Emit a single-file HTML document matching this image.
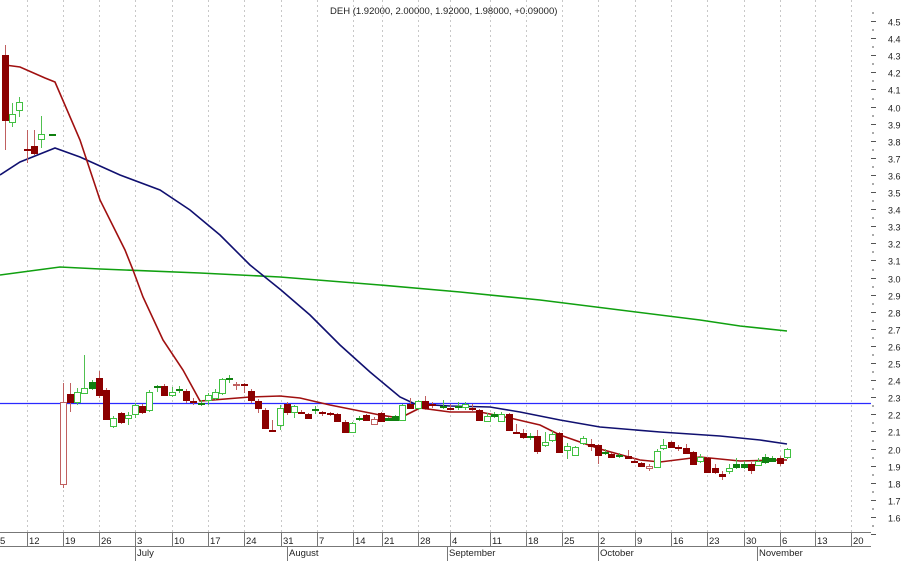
<!DOCTYPE html>
<html><head><meta charset="utf-8"><style>
html,body{margin:0;padding:0;background:#fff;width:903px;height:561px;overflow:hidden}
svg{display:block}
text{font-family:"Liberation Sans",sans-serif;font-size:10px;fill:#222}
</style></head><body>
<svg id="s" width="903" height="561" xmlns="http://www.w3.org/2000/svg">
<g id="grid" stroke="#c8c8c8" stroke-dasharray="2,3" stroke-width="1"></g>
<text x="330" y="14" style="font-size:9.5px">DEH (1.92000, 2.00000, 1.92000, 1.98000, +0.09000)</text>
<line x1="0" y1="403.5" x2="871" y2="403.5" stroke="#2a2aff" stroke-width="1.3"/>
<polyline fill="none" stroke="#10a010" stroke-width="1.6" points="0,275 30,271 60,267 100,269 200,273 280,277 380,285 460,292 540,300 620,310 700,320 740,326 787,331"/>
<polyline fill="none" stroke="#101070" stroke-width="1.6" points="0,175 20,162 55,148 80,157 120,175 160,190 190,210 220,235 250,265 281,290 310,315 340,345 370,372 400,397 415,404 450,406 490,407 520,412 560,420 600,427 660,432 720,436 760,440 787,444"/>
<polyline fill="none" stroke="#a01010" stroke-width="1.6" points="5,65 20,67 45,78 55,82 80,140 100,200 125,250 133,270 143,297 163,340 183,370 200,401 250,397 280,396 300,398 330,405 380,415 400,418 420,408 450,412 480,412 510,418 540,425 560,435 600,449 640,460 660,462 700,457 740,461 780,460 787,460"/>
<g id="c"></g>
<g id="ax"></g>
<line x1="0" y1="532.5" x2="871" y2="532.5" stroke="#777"/>
<line x1="0" y1="546.5" x2="871" y2="546.5" stroke="#777"/>
</svg>
<script>
var NS="http://www.w3.org/2000/svg";
function el(p,t,a,txt){var e=document.createElementNS(NS,t);for(var k in a)e.setAttribute(k,a[k]);if(txt)e.textContent=txt;document.getElementById(p).appendChild(e);return e;}
var seps=[[27,"12"],[63,"19"],[99,"26"],[135,"3"],[172,"10"],[208,"17"],[244,"24"],[281,"31"],[317,"7"],[353,"14"],[382,"21"],[418,"28"],[450,"4"],[490,"11"],[526,"18"],[562,"25"],[598,"2"],[635,"9"],[671,"16"],[707,"23"],[744,"30"],[780,"6"],[815,"13"],[851,"20"]];
seps.forEach(function(s){el("grid","line",{x1:s[0]+.5,y1:0,x2:s[0]+.5,y2:532});
el("ax","line",{x1:s[0]+.5,y1:532,x2:s[0]+.5,y2:547,stroke:"#777"});
el("ax","text",{x:s[0]+2,y:544,style:"font-size:9.5px"},s[1]);});
el("ax","text",{x:0,y:544,style:"font-size:9.5px"},"5");
[[135,"July"],[287,"August"],[447,"September"],[598,"October"],[757,"November"]].forEach(function(m){
el("ax","line",{x1:m[0]+.5,y1:546,x2:m[0]+.5,y2:561,stroke:"#777"});
el("ax","text",{x:m[0]+2,y:556,style:"font-size:9.5px"},m[1]);});
for(var i=0;i<=30;i++){var p=4.5-i*0.1,y=Math.round(21+i*17.1)+.5;
el("ax","line",{x1:871,y1:y,x2:876,y2:y,stroke:"#555"});
el("ax","line",{x1:872,y1:y-8.5,x2:874,y2:y-8.5,stroke:"#555"});
if(i<=29)el("ax","text",{x:888,y:y+4,style:"font-size:9px"},p.toFixed(1));}
var C=[[5,55,120,45,150,"R"],[12,114,122,103,127,"g"],[19,102,110,97,117,"g"],[27,149,150,130,163,"R"],[34,146,153,130,155,"R"],[41,134,139,116,148,"g"],[52,134,135,134,135,"G"],
[63,402,484,383,488,"r"],[70,394,402,383,412,"R"],[77,392,402,388,405,"g"],[84,388,393,355,393,"g"],[92,382,388,380,390,"G"],[99,378,395,371,398,"R"],[106,390,419,388,420,"R"],[113,418,426,416,428,"g"],[121,413,422,412,424,"R"],[128,415,418,412,425,"g"],[135,405,414,403,418,"g"],[142,406,412,404,414,"R"],[149,392,410,390,412,"g"],[157,386,387,385,392,"G"],[164,386,395,384,396,"R"],[172,392,395,387,397,"g"],[179,389,390,386,393,"G"],[186,391,400,389,403,"R"],[193,401,402,398,405,"R"],[201,403,404,400,406,"G"],[208,395,400,393,405,"g"],[215,392,398,389,400,"g"],[222,379,393,378,395,"g"],[229,378,379,375,383,"G"],[236,384,385,382,390,"r"],[244,384,385,383,393,"R"],[251,391,400,389,403,"R"],[258,401,408,399,413,"R"],[265,410,428,408,429,"R"],[272,430,431,420,431,"R"],[280,408,425,405,430,"g"],[287,404,412,402,415,"R"],[294,406,412,405,418,"g"],[301,412,413,410,414,"R"],[308,414,418,413,419,"R"],[315,409,410,406,414,"G"],[322,412,413,411,416,"R"],[330,413,414,412,416,"R"],[337,414,421,413,422,"R"],[345,422,432,420,433,"R"],[352,423,432,422,433,"g"],[359,418,419,416,421,"G"],[366,415,420,414,421,"R"],[374,419,424,417,425,"r"],[381,413,421,412,422,"R"],[388,418,420,417,421,"G"],[395,416,420,415,421,"G"],[402,405,420,404,421,"g"],[410,404,408,398,409,"R"],[418,401,408,400,410,"g"],[425,401,408,396,410,"R"],[432,404,405,402,408,"R"],[443,406,407,400,409,"G"],[450,408,409,404,410,"R"],[458,406,407,402,410,"G"],[465,404,407,402,410,"g"],[472,408,409,404,411,"R"],[479,410,420,409,421,"R"],[487,416,421,413,422,"g"],[494,414,416,412,418,"G"],[501,414,421,412,422,"g"],[509,414,430,413,431,"R"],[516,432,433,424,433,"R"],[523,433,437,429,439,"R"],[530,436,437,433,440,"G"],[537,436,451,430,454,"R"],[545,442,445,432,447,"g"],[552,434,440,431,442,"g"],[559,433,452,432,453,"R"],[567,446,450,443,459,"g"],[575,447,455,446,456,"g"],[583,438,443,436,445,"g"],[591,444,446,439,451,"R"],[598,445,455,444,464,"R"],[605,452,453,449,455,"G"],[611,454,457,453,458,"R"],[619,455,456,453,458,"G"],[628,456,458,450,459,"R"],[634,461,462,458,463,"R"],[641,463,466,462,467,"R"],[649,466,468,464,471,"r"],[657,451,467,449,468,"g"],[663,445,448,439,450,"g"],[671,442,447,441,448,"R"],[678,447,448,445,451,"R"],[686,448,453,444,454,"R"],[693,452,464,451,465,"R"],[700,457,461,454,463,"g"],[707,458,472,457,473,"R"],[715,468,472,464,474,"R"],[722,474,476,471,480,"R"],[729,468,471,464,474,"g"],[736,464,467,458,469,"G"],[744,464,467,461,469,"G"],[751,464,470,462,474,"R"],[758,461,465,458,466,"g"],[765,457,462,454,464,"G"],[772,458,461,456,462,"G"],[780,458,463,456,466,"R"],[787,449,457,448,459,"g"]];
C.forEach(function(c){var red=c[5]=="R"||c[5]=="r";var col=red?(c[5]=="R"?"#8b0000":"#c06060"):(c[5]=="G"?"#108010":"#40c040");
el("c","line",{x1:c[0]+.5,y1:c[3],x2:c[0]+.5,y2:c[4],stroke:red?"#c06060":"#50c050"});
var h=Math.max(1,c[2]-c[1]);var filled=(c[5]=="R"||c[5]=="G");
el("c","rect",{x:c[0]-3+.5,y:c[1]+.5,width:6,height:h,fill:filled?col:"#fff",stroke:col,"stroke-width":1});});
</script>
</body></html>
